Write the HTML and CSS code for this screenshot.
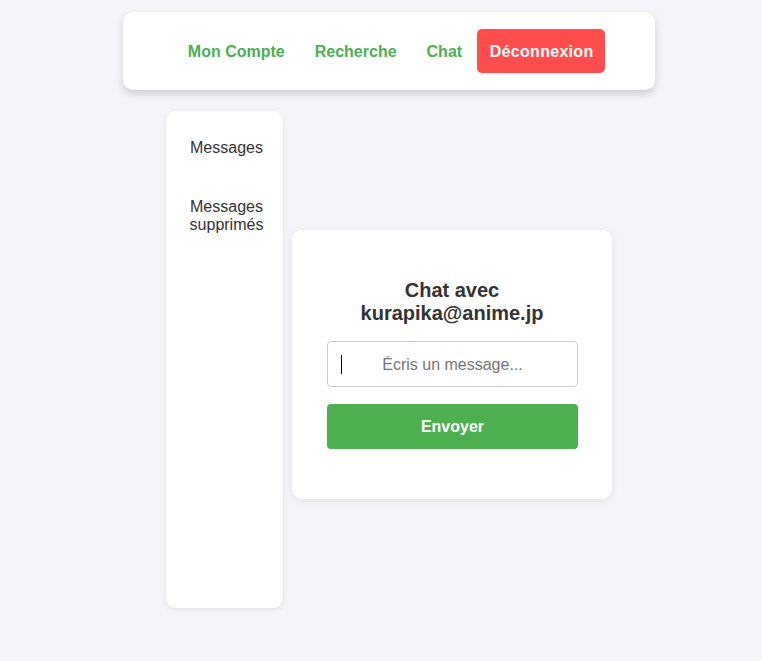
FILE: index.html
```html
<!DOCTYPE html>
<html lang="fr">
<head>
<meta charset="utf-8">
<title>Chat</title>
<link rel="stylesheet" href="styles.css">
</head>
<body>
<div class="page">
  <nav class="navbar">
    <a class="nav-link" href="#">Mon Compte</a>
    <a class="nav-link" href="#">Recherche</a>
    <a class="nav-link" href="#">Chat</a>
    <button class="logout">Déconnexion</button>
  </nav>
  <div class="main">
    <aside class="sidebar">
      <a class="side-link" href="#">Messages</a>
      <a class="side-link" href="#">Messages supprimés</a>
    </aside>
    <section class="card">
      <h2 class="title">Chat avec kurapika@anime.jp</h2>
      <div class="field">
        <input class="msg-input" type="text" placeholder="Écris un message...">
        <span class="caret"></span>
      </div>
      <button class="send">Envoyer</button>
    </section>
  </div>
</div>
</body>
</html>
```

FILE: styles.css
```css
* { box-sizing: border-box; }
html, body { margin: 0; padding: 0; }
body {
  background: #f4f4f9;
  font-family: "Liberation Sans", Arial, sans-serif;
  color: #333;
  height: 661px;
  overflow: hidden;
}
.page {
  display: flex;
  flex-direction: column;
  align-items: center;
  padding: 12px 0 0 16px;
}
.navbar {
  width: 532px;
  height: 78px;
  background: #fff;
  border-radius: 10px;
  box-shadow: 0 4px 8px rgba(0, 0, 0, 0.16);
  display: flex;
  align-items: center;
  justify-content: center;
  padding-left: 1px;
}
.nav-link {
  color: #4caf50;
  font-weight: bold;
  font-size: 16px;
  text-decoration: none;
  padding: 2px 15px 0;
}
.nav-link:first-child { padding-left: 14px; }
.logout {
  background: #ff4d4d;
  color: #fff;
  border: none;
  border-radius: 5px;
  font-family: "Liberation Sans", Arial, sans-serif;
  font-weight: bold;
  font-size: 16px;
  width: 128px;
  height: 44px;
  padding: 2px 0 0 1px;
  letter-spacing: 0.3px;
}
.main {
  display: flex;
  gap: 9px;
  margin-top: 21px;
}
.sidebar {
  width: 117px;
  height: 497px;
  background: #fff;
  border-radius: 10px;
  box-shadow: 0 2px 6px rgba(0, 0, 0, 0.08);
  display: flex;
  flex-direction: column;
  align-items: center;
  gap: 41px;
  padding: 28px 8px 27px 12px;
}
.side-link {
  color: #333;
  text-decoration: none;
  font-size: 16px;
  line-height: 18px;
  text-align: center;
}
.card {
  width: 320px;
  align-self: flex-start;
  margin-top: 119px;
  background: #fff;
  border-radius: 10px;
  box-shadow: 0 2px 8px rgba(0, 0, 0, 0.08);
  padding: 49px 35px 50px;
  display: flex;
  flex-direction: column;
}
.title {
  margin: 0 0 16px;
  font-size: 20px;
  line-height: 23px;
  text-align: center;
  color: #333;
}
.field {
  position: relative;
  margin-bottom: 17px;
}
.msg-input {
  display: block;
  width: 251px;
  height: 46px;
  border: 1px solid #ccc;
  border-radius: 4px;
  font-family: "Liberation Sans", Arial, sans-serif;
  font-size: 16px;
  padding: 1px 14px 0;
  outline: none;
  background: #fff;
}
.msg-input::placeholder {
  color: #757575;
  text-align: center;
}
.caret {
  position: absolute;
  left: 14px;
  top: 14px;
  width: 1px;
  height: 19px;
  background: #000;
}
.send {
  width: 251px;
  height: 45px;
  background: #4caf50;
  color: #fff;
  border: none;
  border-radius: 4px;
  font-family: "Liberation Sans", Arial, sans-serif;
  font-weight: bold;
  font-size: 16px;
  padding: 1px 0 0;
}
```
